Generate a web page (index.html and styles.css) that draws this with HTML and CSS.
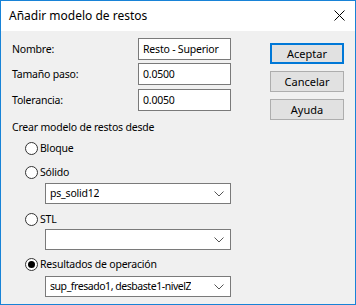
FILE: index.html
```html
<!DOCTYPE html>
<html>
<head>
  <title>Añadir modelo de restos</title>
  <link rel="stylesheet" href="styles.css">
</head>
<body>
  <div class="window">
    <div class="titlebar">
      <span class="title">Añadir modelo de restos</span>
      <span class="close">
        <svg width="11" height="11" viewBox="0 0 11 11"><path d="M0.5 0.5 L10.5 10.5 M10.5 0.5 L0.5 10.5" stroke="#000" stroke-width="1" fill="none"/></svg>
      </span>
    </div>
    <div class="content">
      <div class="main">
        <div class="fields">
          <label class="field-label">Nombre:</label>
          <div class="textbox">Resto - Superior</div>
          <label class="field-label">Tamaño paso:</label>
          <div class="textbox">0.0500</div>
          <label class="field-label tol">Tolerancia:</label>
          <div class="textbox tol">0.0050</div>
        </div>

        <div class="group-title">Crear modelo de restos desde</div>

        <div class="radio-row first"><span class="radio"></span>Bloque</div>
        <div class="radio-row"><span class="radio"></span>Sólido</div>
        <div class="combo c1"><span>ps_solid12</span><svg class="chev" width="10" height="6" viewBox="0 0 10 6"><path d="M0.5 0.5 L5 5 L9.5 0.5" stroke="#555" fill="none"/></svg></div>
        <div class="radio-row r3"><span class="radio"></span>STL</div>
        <div class="combo c2"><span></span><svg class="chev" width="10" height="6" viewBox="0 0 10 6"><path d="M0.5 0.5 L5 5 L9.5 0.5" stroke="#555" fill="none"/></svg></div>
        <div class="radio-row r4"><span class="radio checked"></span>Resultados de operación</div>
        <div class="combo c3"><span class="long">sup_fresado1, desbaste1-nivelZ</span><svg class="chev" width="10" height="6" viewBox="0 0 10 6"><path d="M0.5 0.5 L5 5 L9.5 0.5" stroke="#555" fill="none"/></svg></div>
      </div>
      <div class="buttons">
        <button class="btn default">Aceptar</button>
        <button class="btn">Cancelar</button>
        <button class="btn">Ayuda</button>
      </div>
    </div>
  </div>
</body>
</html>
```

FILE: styles.css
```css
body {
  margin: 0;
  font-family: "Noto Sans", sans-serif;
  font-size: 10.5px;
  letter-spacing: -0.2px;
  color: #000;
}

.window {
  width: 356px;
  height: 305px;
  box-sizing: border-box;
  border: 1px solid #1883d7;
  background-color: #f0f0f0;
  display: flex;
  flex-direction: column;
}

.titlebar {
  height: 30px;
  background-color: #ffffff;
  display: flex;
  align-items: center;
  justify-content: space-between;
  padding: 0 10px 0 8px;
}

.title {
  font-size: 12px;
  letter-spacing: 0;
  line-height: 16px;
}

.close {
  display: flex;
  margin-top: -1px;
}

.content {
  display: flex;
  padding: 7px 11px 0 11px;
}

.main {
  width: 219px;
}

/* Top fields */
.fields {
  display: grid;
  grid-template-columns: 126px 93px;
  row-gap: 3px;
  align-items: center;
}

.field-label {
  line-height: 16px;
}

.textbox {
  height: 22px;
  box-sizing: border-box;
  border: 1px solid #7a7a7a;
  background-color: #ffffff;
  padding: 0 4px;
  line-height: 20px;
  white-space: nowrap;
  overflow: hidden;
}

.textbox.tol,
.field-label.tol {
  margin-top: 1px;
}

.group-title {
  line-height: 16px;
  margin-top: 8px;
}

/* Radio buttons */
.radio-row {
  display: flex;
  align-items: center;
  line-height: 16px;
  margin-left: 13px;
  margin-top: 8px;
}

.radio-row.first {
  margin-top: 5px;
}

.radio-row.r3 {
  margin-top: 7px;
}

.radio-row.r4 {
  margin-top: 6px;
}

.radio {
  width: 13px;
  height: 13px;
  box-sizing: border-box;
  border: 1px solid #333;
  border-radius: 50%;
  background-color: #ffffff;
  margin-right: 2px;
  display: flex;
  align-items: center;
  justify-content: center;
}

.radio.checked::after {
  content: "";
  width: 7px;
  height: 7px;
  border-radius: 50%;
  background-color: #000;
}

/* Combo boxes */
.combo {
  margin-left: 33px;
  height: 21px;
  box-sizing: border-box;
  border: 1px solid #7a7a7a;
  background-color: #ffffff;
  display: flex;
  align-items: center;
  justify-content: space-between;
  padding: 0 6px 0 4px;
  line-height: 19px;
  white-space: nowrap;
}

.combo span {
  overflow: hidden;
}

.combo .long {
  letter-spacing: -0.45px;
}

.combo.c1 {
  margin-top: 3px;
}

.combo.c2 {
  margin-top: 2px;
}

.combo.c3 {
  margin-top: 4px;
}

.chev {
  flex-shrink: 0;
}

/* Buttons */
.buttons {
  margin-left: auto;
  padding-top: 5px;
  display: flex;
  flex-direction: column;
  gap: 7px;
}

.btn {
  width: 74px;
  height: 21px;
  box-sizing: border-box;
  border: 1px solid #adadad;
  background-color: #e1e1e1;
  font-family: inherit;
  font-size: 11px;
  letter-spacing: 0;
  padding: 0;
  color: #000;
}

.btn.default {
  border: 2px solid #0078d7;
}
```
